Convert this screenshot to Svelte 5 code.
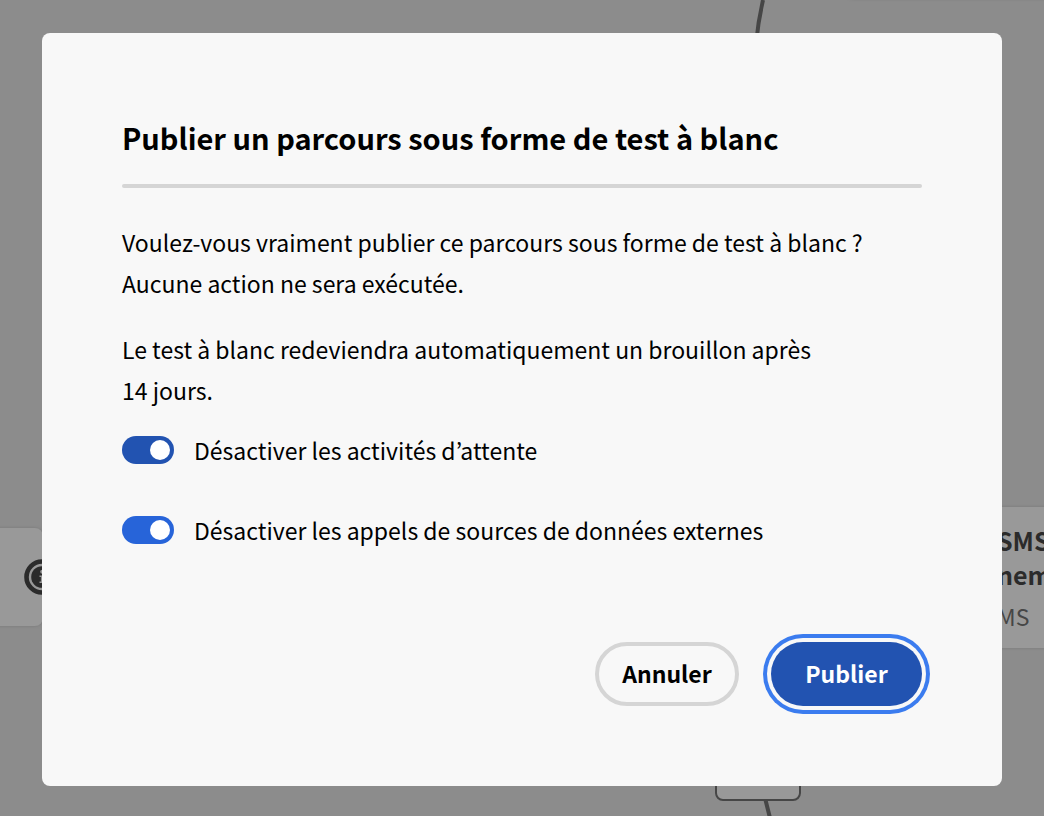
<script>
  let skipWaits = $state(true);
  let skipSources = $state(true);
</script>

<div class="page">
  <div class="canvas">
    <svg class="edge top" width="14" height="44" viewBox="0 0 14 44" aria-hidden="true">
      <path d="M9 0Q4 22 2 44" />
    </svg>
    <svg class="edge bottom" width="14" height="20" viewBox="0 0 14 20" aria-hidden="true">
      <path d="M2 0L7 20" />
    </svg>
    <div class="node upper"></div>
    <div class="node left">
      <svg class="info" width="36" height="36" viewBox="0 0 36 36" aria-hidden="true">
        <circle cx="18" cy="18" r="15.5" fill="none" stroke="#2b2b2b" stroke-width="4.6" />
        <circle cx="18" cy="18" r="10.8" fill="#2b2b2b" />
        <circle cx="18.2" cy="12.8" r="2" fill="#999" />
        <path d="M15.5 16.4h4.2v6h1.6v1.6h-5.8v-1.6h1.4v-4.4h-1.4z" fill="#999" />
      </svg>
    </div>
    <div class="node sms">
      <strong>SMS</strong>
      <strong>nem</strong>
      <span>MS</span>
    </div>
    <div class="node label"></div>
  </div>

  <div class="dialog" role="dialog" aria-modal="true" aria-labelledby="dialog-title">
    <h1 id="dialog-title">Publier un parcours sous forme de test à blanc</h1>
    <hr />
    <p class="question">
      Voulez-vous vraiment publier ce parcours sous forme de test à blanc&nbsp;? Aucune action ne sera exécutée.
    </p>
    <p>Le test à blanc redeviendra automatiquement un brouillon après 14&nbsp;jours.</p>
    <div class="options">
      <label class="option">
        <input class="focused" type="checkbox" role="switch" bind:checked={skipWaits} />
        <span>Désactiver les activités d’attente</span>
      </label>
      <label class="option">
        <input type="checkbox" role="switch" bind:checked={skipSources} />
        <span>Désactiver les appels de sources de données externes</span>
      </label>
    </div>
    <div class="actions">
      <button class="cancel" type="button">Annuler</button>
      <button class="confirm" type="button">Publier</button>
    </div>
  </div>
</div>

<style>
  :global(body) {
    margin: 0;
    background: #8c8c8c;
  }

  .page {
    position: relative;
    box-sizing: border-box;
    min-height: 100vh;
    padding: 33px 42px 30px;
    overflow: hidden;
    color: #000;
    font-family: "Noto Sans CJK KR", "Noto Sans", sans-serif;
  }

  .canvas {
    position: absolute;
    inset: 0;
  }

  .edge {
    position: absolute;
    fill: none;
    stroke: #464646;
    stroke-width: 4;
  }

  .edge.top {
    left: 754px;
    top: 0;
  }

  .edge.bottom {
    left: 763px;
    top: 798px;
  }

  .node {
    position: absolute;
    box-sizing: border-box;
    background: #999;
    border-radius: 8px;
    box-shadow: 0 0 3px #777;
  }

  .upper {
    left: 846px;
    top: -20px;
    width: 240px;
    height: 19px;
  }

  .left {
    left: -20px;
    top: 528px;
    width: 63px;
    height: 98px;
  }

  .info {
    position: absolute;
    left: 44px;
    top: 31px;
  }

  .sms {
    display: flex;
    flex-direction: column;
    left: 960px;
    top: 507px;
    width: 200px;
    height: 141px;
    padding: 16px 0 0 37px;
    color: #2b2b2b;
    font-size: 25px;
    line-height: 34px;
  }

  .sms span {
    margin-top: 8px;
    color: #464646;
    font-size: 23px;
  }

  .label {
    left: 715px;
    top: 760px;
    width: 86px;
    height: 41px;
    border: 2px solid #464646;
    box-shadow: none;
  }

  .dialog {
    position: relative;
    padding: 80px;
    background: #f8f8f8;
    border-radius: 8px;
  }

  h1 {
    margin: 0;
    font-size: 29px;
    line-height: 48px;
    font-weight: 700;
  }

  hr {
    height: 4px;
    margin: 23px 0 34px;
    border: 0;
    border-radius: 2px;
    background: #d5d5d5;
  }

  p {
    max-width: 760px;
    margin: 0;
    font-size: 23px;
    line-height: 41px;
  }

  .question {
    margin-bottom: 25px;
  }

  .options {
    display: grid;
    gap: 40px;
    margin-top: 19px;
  }

  .option {
    display: flex;
    align-items: center;
    gap: 20px;
    font-size: 23px;
    line-height: 40px;
  }

  input {
    appearance: none;
    flex: none;
    display: flex;
    align-items: center;
    box-sizing: border-box;
    width: 52px;
    height: 28px;
    margin: 0;
    padding: 0 4px;
    border-radius: 14px;
    background: #909090;
  }

  input::before {
    content: "";
    width: 20px;
    height: 20px;
    border-radius: 50%;
    background: #fff;
  }

  input:checked {
    justify-content: flex-end;
    background: #2764d9;
  }

  input.focused:checked {
    background: #2253b1;
  }

  .actions {
    display: flex;
    justify-content: flex-end;
    gap: 32px;
    margin-top: 92px;
  }

  button {
    box-sizing: border-box;
    height: 64px;
    padding: 0 0 2px;
    border: 0;
    border-radius: 32px;
    font: 700 23px "Noto Sans CJK KR", "Noto Sans", sans-serif;
  }

  .cancel {
    width: 144px;
    border: 4px solid #d5d5d5;
    background: transparent;
    color: #000;
  }

  .confirm {
    width: 151px;
    background: #2253b1;
    color: #fff;
    box-shadow: 0 0 0 4px #f8f8f8, 0 0 0 8px #3b7cef;
  }
</style>
